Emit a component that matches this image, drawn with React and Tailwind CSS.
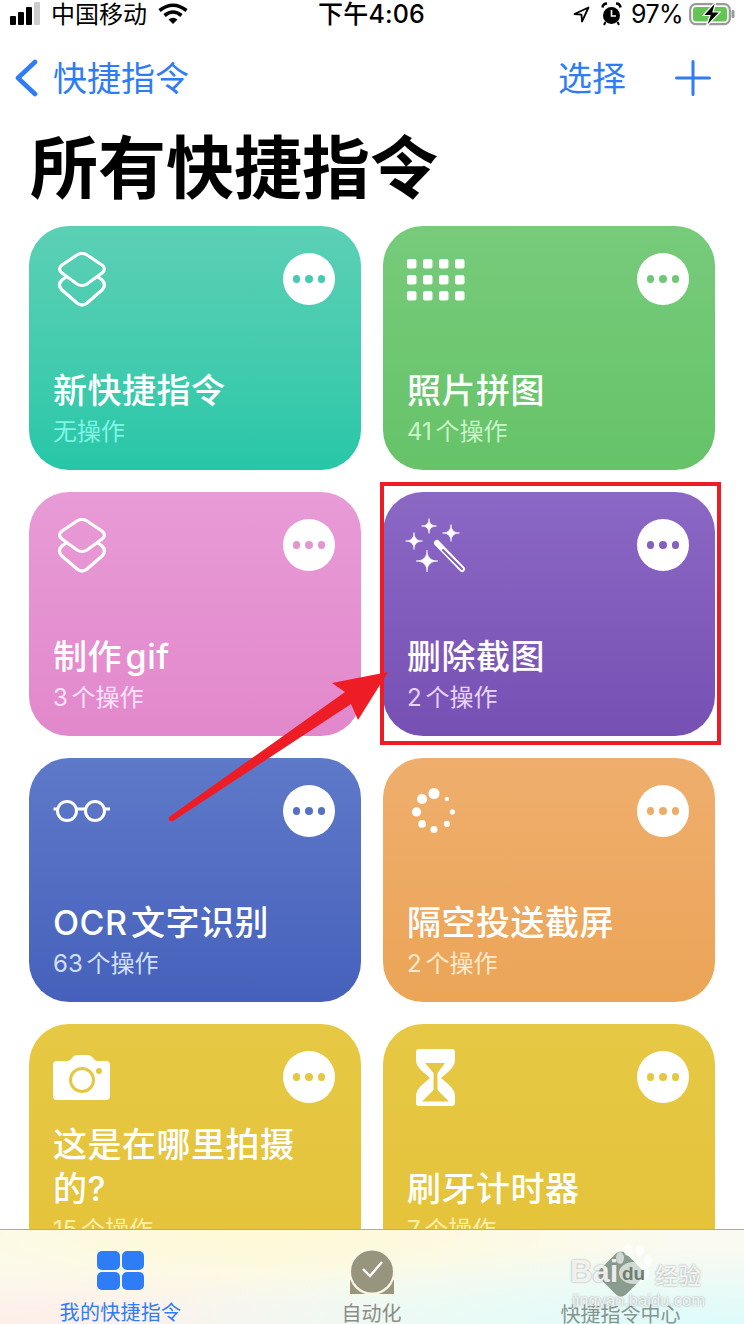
const star = (x, y, r) =>
  `M${x},${y - r} Q${x},${y} ${x + r},${y} Q${x},${y} ${x},${y + r} Q${x},${y} ${x - r},${y} Q${x},${y} ${x},${y - r} Z`;

const LayersIcon = () => (
  <svg width="50" height="56" viewBox="0 0 50 56" fill="none" stroke="white" strokeWidth="3.2" strokeLinecap="round">
    <path d="M20,3 Q25,0 30,3 L45,13 Q50,17 45,21 L30,32 Q25,35 20,32 L5,21 Q0,17 5,13 Z" />
    <path d="M9,25 L5,28 Q0,33 5,38 L20,51 Q25,55 30,51 L45,38 Q50,33 45,28 L41,25" />
  </svg>
);

const GridIcon = () => (
  <svg width="58" height="42" viewBox="0 0 58 42" fill="white">
    {[0, 16, 32].map((y) =>
      [0, 16, 32, 48].map((x) => <rect key={`${x}-${y}`} x={x} y={y} width="9.5" height="9.5" rx="2" />)
    )}
  </svg>
);

const WandIcon = () => (
  <svg width="62" height="58" viewBox="405 517 62 58" fill="white">
    <path d={star(429, 526, 7.5)} strokeWidth="0.6" stroke="white" />
    <path d={star(451, 533, 8.5)} strokeWidth="0.6" stroke="white" />
    <path d={star(414, 541, 8.5)} strokeWidth="0.6" stroke="white" />
    <path d={star(427, 561, 11)} strokeWidth="0.6" stroke="white" />
    <path d="M437,543 L462,569" stroke="white" strokeWidth="6" strokeLinecap="round" />
    <path d="M443,550 L462,569" stroke="#7f5bbb" strokeWidth="2" strokeLinecap="round" />
  </svg>
);

const GlassesIcon = () => (
  <svg width="58" height="26" viewBox="0 0 58 26" fill="none" stroke="white" strokeWidth="3">
    <circle cx="14" cy="13" r="9.5" />
    <circle cx="42" cy="13" r="9.5" />
    <path d="M23.5,11 H32.5 M0.5,11 H4.5 M51.5,11 H57" />
  </svg>
);

const LoadingIcon = () => (
  <svg width="46" height="50" viewBox="411 785 50 52" fill="white">
    <circle cx="436" cy="792" r="6" />
    <circle cx="423" cy="798" r="5.5" />
    <circle cx="417" cy="812" r="5" />
    <circle cx="423" cy="825" r="4.2" />
    <circle cx="436" cy="831" r="3.8" />
    <circle cx="450" cy="825" r="3.3" />
    <circle cx="456" cy="812" r="2.8" />
    <circle cx="450" cy="798" r="2.4" />
  </svg>
);

const CameraIcon = () => (
  <svg width="58" height="46" viewBox="53 1054 58 46">
    <path
      d="M57,1061 H68 Q70,1061 72,1058 Q74,1055 77,1055 H88 Q91,1055 93,1058 Q95,1061 97,1061 H106 Q110,1061 110,1065 V1096 Q110,1100 106,1100 H57 Q53,1100 53,1096 V1065 Q53,1061 57,1061 Z"
      fill="white"
    />
    <circle cx="82" cy="1080" r="11.5" fill="none" stroke="#e6c742" strokeWidth="3" />
    <circle cx="99" cy="1071" r="3" fill="#e6c742" />
  </svg>
);

const HourglassIcon = () => (
  <svg width="40" height="58" viewBox="416 1049 40 58">
    <path
      d="M419,1049 H452 Q455,1049 455,1052 V1060 Q455,1066 448,1072 L441,1078 L448,1084 Q455,1090 455,1096 V1103 Q455,1106 452,1106 H419 Q416,1106 416,1103 V1096 Q416,1090 423,1084 L430,1078 L423,1072 Q416,1066 416,1060 V1052 Q416,1049 419,1049 Z"
      fill="white"
    />
    <path
      d="M425,1063 H445 L437.5,1073 V1090 L449,1101.5 H422 L433.5,1090 V1073 Z"
      fill="#e6c742"
    />
  </svg>
);

const cards = [
  {
    title: "新快捷指令",
    sub: "无操作",
    bg: "bg-gradient-to-b from-[#5bd0b5] to-[#25c7a8]",
    dot: "bg-[#44cbb0]",
    subColor: "text-[#7ff5e6]",
    icon: <LayersIcon />,
    iconBox: "pt-[26px] pl-[28px]",
  },
  {
    title: "照片拼图",
    sub: "41 个操作",
    bg: "bg-gradient-to-b from-[#77cb7b] to-[#66c368]",
    dot: "bg-[#70c874]",
    subColor: "text-[#c9f5c9]",
    icon: <GridIcon />,
    iconBox: "pt-[33px] pl-[24px]",
  },
  {
    title: "制作 gif",
    sub: "3 个操作",
    bg: "bg-gradient-to-b from-[#e89bd6] to-[#e288cc]",
    dot: "bg-[#e695d3]",
    subColor: "text-[#fde4f8]",
    icon: <LayersIcon />,
    iconBox: "pt-[26px] pl-[28px]",
  },
  {
    title: "删除截图",
    sub: "2 个操作",
    bg: "bg-gradient-to-b from-[#8c68c5] to-[#7650b3]",
    dot: "bg-[#8460bf]",
    subColor: "text-[#e8d4f8]",
    icon: <WandIcon />,
    iconBox: "pt-[25px] pl-[22px]",
  },
  {
    title: "OCR 文字识别",
    sub: "63 个操作",
    bg: "bg-gradient-to-b from-[#5f79c9] to-[#4661bb]",
    dot: "bg-[#5670c4]",
    subColor: "text-[#d3e0fc]",
    icon: <GlassesIcon />,
    iconBox: "pt-[40px] pl-[24px]",
  },
  {
    title: "隔空投送截屏",
    sub: "2 个操作",
    bg: "bg-gradient-to-b from-[#efae6d] to-[#eba557]",
    dot: "bg-[#eeac68]",
    subColor: "text-[#fdeacc]",
    icon: <LoadingIcon />,
    iconBox: "pt-[28px] pl-[28px]",
  },
  {
    title: "这是在哪里拍摄的?",
    sub: "15 个操作",
    bg: "bg-gradient-to-b from-[#e6c844] to-[#e5c33a]",
    dot: "bg-[#e6c742]",
    subColor: "text-[#fbf0a8]",
    icon: <CameraIcon />,
    iconBox: "pt-[30px] pl-[24px]",
  },
  {
    title: "刷牙计时器",
    sub: "7 个操作",
    bg: "bg-gradient-to-b from-[#e6c844] to-[#e5c33a]",
    dot: "bg-[#e6c742]",
    subColor: "text-[#fbf0a8]",
    icon: <HourglassIcon />,
    iconBox: "pt-[25px] pl-[33px]",
  },
];

const Card = ({ card }) => (
  <div className={`relative h-[244px] w-[332px] rounded-[40px] flex flex-col justify-between ${card.bg}`}>
    <div className="flex items-start justify-between">
      <div className={card.iconBox}>{card.icon}</div>
      <div className="mt-[27px] mr-[26px] w-[52px] h-[52px] rounded-full bg-white flex items-center justify-center gap-[5px]">
        <span className={`w-[7.5px] h-[7.5px] rounded-full ${card.dot}`} />
        <span className={`w-[7.5px] h-[7.5px] rounded-full ${card.dot}`} />
        <span className={`w-[7.5px] h-[7.5px] rounded-full ${card.dot}`} />
      </div>
    </div>
    <div className="pl-[24px] pr-[50px] pb-[19px]">
      <div className="text-[34px] leading-[44px] font-medium text-white tracking-[0.5px] [word-spacing:-6px]">
        {card.title}
      </div>
      <div className={`text-[24px] leading-[38px] [word-spacing:-3px] ${card.subColor}`}>{card.sub}</div>
    </div>
  </div>
);

const StatusBar = () => (
  <div className="h-[28px] flex items-center text-black text-[24px] leading-[28px]">
    <div className="w-[318px] flex items-center pl-[10px]">
      <div className="flex items-end gap-[2px] h-[24px] pb-[1px]">
        <span className="w-[6px] h-[9px] rounded-[1px] bg-black" />
        <span className="w-[6px] h-[13px] rounded-[1px] bg-black" />
        <span className="w-[6px] h-[18px] rounded-[1px] bg-black" />
        <span className="w-[6px] h-[23px] rounded-[1px] bg-[#cccccc]" />
      </div>
      <span className="ml-[11px] mt-[2px]">中国移动</span>
      <svg className="ml-[11px]" width="30" height="22" viewBox="0 0 30 22" fill="none" stroke="black" strokeWidth="3.6">
        <path d="M1.5,7.5 Q15,-3 28.5,7.5" />
        <path d="M6.5,12.5 Q15,5.5 23.5,12.5" />
        <path d="M15,21 L10.5,16.5 Q15,13 19.5,16.5 Z" fill="black" stroke="none" />
      </svg>
    </div>
    <div className="font-medium text-[25px] tracking-[0.2px] whitespace-nowrap">下午4:06</div>
    <div className="flex-1 flex items-center justify-end pr-[9px]">
      <svg width="17" height="17" viewBox="0 0 17 17" fill="none" stroke="black" strokeWidth="1.8" strokeLinejoin="round">
        <path d="M15.5,1.5 L1.5,8 L8.5,8.7 L9,15.5 Z" />
      </svg>
      <svg className="ml-[11px]" width="21" height="24" viewBox="0 0 21 24">
        <circle cx="10.5" cy="13.5" r="8.5" fill="black" />
        <path d="M1.5,5.5 Q2,1.5 6,1.5 M15,1.5 Q19,1.5 19.5,5.5" stroke="black" strokeWidth="2.6" fill="none" />
        <path d="M4.5,20 L3,23 M16.5,20 L18,23" stroke="black" strokeWidth="2" fill="none" />
        <path d="M10.5,8 V14 H15" stroke="white" strokeWidth="1.6" fill="none" />
      </svg>
      <span className="ml-[9px] font-['Inter',sans-serif] text-[25px] tracking-[-0.6px]">97%</span>
      <svg className="ml-[6px]" width="46" height="26" viewBox="0 0 46 26">
        <rect x="1.2" y="3.2" width="39.6" height="20" rx="5.5" fill="white" stroke="#9a9a9a" strokeWidth="2.2" />
        <rect x="4" y="6" width="34" height="14.5" rx="3" fill="#62c554" />
        <rect x="42.5" y="9" width="3" height="8" rx="1.5" fill="#9a9a9a" />
        <path d="M27,0.5 L14,14.5 H21 L17,26 L31,11 H24 Z" fill="black" stroke="white" strokeWidth="1.2" />
      </svg>
    </div>
  </div>
);

const TabBar = () => (
  <div className="absolute left-0 right-0 top-[1229px] h-[95px] border-t border-[#b0aa90] bg-[#fbfaf0] overflow-hidden">
    <div className="absolute inset-0 bg-[radial-gradient(ellipse_at_100%_100%,#dcfbfb_0%,rgba(220,251,251,0)_60%),radial-gradient(ellipse_at_0%_100%,#fdeee8_0%,rgba(253,238,232,0)_45%),radial-gradient(ellipse_at_35%_0%,#fff9d4_0%,rgba(255,249,212,0)_60%)]" />
    <div className="relative grid grid-cols-3 h-full text-[20px] leading-[24px]">
      <div className="flex flex-col items-center pt-[21px] pr-[7px]">
        <div className="grid grid-cols-2 gap-[2px] w-[47px] h-[39px]">
          <span className="rounded-[5px] bg-[#2f7df6]" />
          <span className="rounded-[5px] bg-[#2f7df6]" />
          <span className="rounded-[5px] bg-[#2f7df6]" />
          <span className="rounded-[5px] bg-[#2f7df6]" />
        </div>
        <span className="mt-[11px] text-[#2f7df6] tracking-[0.3px]">我的快捷指令</span>
      </div>
      <div className="flex flex-col items-center pt-[20px] pr-[1px]">
        <svg width="44" height="45" viewBox="0 0 44 45">
          <path d="M0,30 V44 H44 V30 Z" fill="#98957f" />
          <circle cx="22" cy="22" r="23" fill="#fbf6e6" />
          <circle cx="22" cy="21.5" r="21" fill="#98957f" />
          <path d="M13,19 L20,26 L32,12" fill="none" stroke="white" strokeWidth="2.4" />
        </svg>
        <span className="mt-[7px] text-[#8c8c86]">自动化</span>
      </div>
      <div className="flex flex-col items-center pt-[21px] pl-[1px]">
        <svg width="48" height="46" viewBox="0 0 48 46">
          <rect x="6" y="5" width="36" height="36" rx="7" transform="rotate(45 24 23)" fill="#8a9c8e" />
        </svg>
        <span className="mt-[6px] text-[#84948e]">快捷指令中心</span>
      </div>
    </div>
  </div>
);

// baidu watermark in the corner of the screenshot
const Watermark = () => (
  <div className="absolute left-[568px] top-[1244px] w-[136px] h-[64px] text-white/85 whitespace-nowrap [text-shadow:0_0_2px_rgba(110,110,110,0.75)]">
    <svg className="absolute left-[44px] top-0" width="44" height="44" viewBox="0 0 44 44" fill="white" fillOpacity="0.62">
      <ellipse cx="8" cy="14" rx="4" ry="6" />
      <ellipse cx="16" cy="6" rx="4.5" ry="6" />
      <ellipse cx="28" cy="6" rx="4.5" ry="6" />
      <ellipse cx="36" cy="17" rx="4" ry="6" />
      <ellipse cx="22" cy="29" rx="15" ry="11" />
    </svg>
    <div className="absolute left-[2px] top-[12px] text-[31px] leading-[32px] font-bold font-['Liberation_Sans',sans-serif]">
      Bai
    </div>
    <div className="absolute left-[54px] top-[18px] text-[19px] leading-[24px] font-bold text-[#6d7d70] [text-shadow:none] font-['Liberation_Sans',sans-serif]">
      du
    </div>
    <div className="absolute left-[87px] top-[16px] text-[23px] leading-[28px] font-medium font-['Noto_Sans_CJK_SC',sans-serif]">
      经验
    </div>
    <div className="absolute left-[4px] top-[47px] text-[16.5px] leading-[18px] font-['Liberation_Sans',sans-serif] text-white/80">
      jingyan.baidu.com
    </div>
  </div>
);

export default function App() {
  return (
    <div className="relative w-[744px] h-[1324px] overflow-hidden bg-white font-['Inter','Noto_Sans_CJK_SC',sans-serif]">
      <StatusBar />

      {/* nav */}
      <div className="mt-[22px] h-[56px] flex items-center justify-between text-[#2f7df6] text-[34px]">
        <div className="flex items-center">
          <svg className="ml-[14px]" width="24" height="38" viewBox="0 0 24 38" fill="none" stroke="#2f7df6" strokeWidth="4.6" strokeLinecap="round" strokeLinejoin="round">
            <path d="M21,3 L4,19 L21,35" />
          </svg>
          <span className="ml-[15px]">快捷指令</span>
        </div>
        <div className="flex items-center">
          <span className="-mr-[1px]">选择</span>
          <svg className="ml-[50px] mr-[33px]" width="36" height="36" viewBox="0 0 36 36" fill="none" stroke="#2f7df6" strokeWidth="3" strokeLinecap="round">
            <path d="M18,1.5 V34.5 M1.5,18 H34.5" />
          </svg>
        </div>
      </div>

      <h1 className="mt-[22px] ml-[30px] h-[80px] text-[68px] leading-[80px] font-bold text-black">所有快捷指令</h1>

      {/* cards */}
      <div className="mt-[18px] ml-[29px] grid grid-cols-[332px_332px] gap-[22px]">
        {cards.map((card) => (
          <Card key={card.title} card={card} />
        ))}
      </div>

      <TabBar />
      <Watermark />

      {/* red annotation */}
      <div className="absolute left-[380px] top-[482px] w-[341px] h-[263px] border-[4px] border-[#ee1c25]" />
      <svg className="absolute left-0 top-0 pointer-events-none" width="744" height="1324">
        <path
          d="M388,672 L358,720 L351,704 L173,821 Q168,822 169,817 L345,692 L332,683 Z"
          fill="#ee1c25"
        />
      </svg>
    </div>
  );
}
